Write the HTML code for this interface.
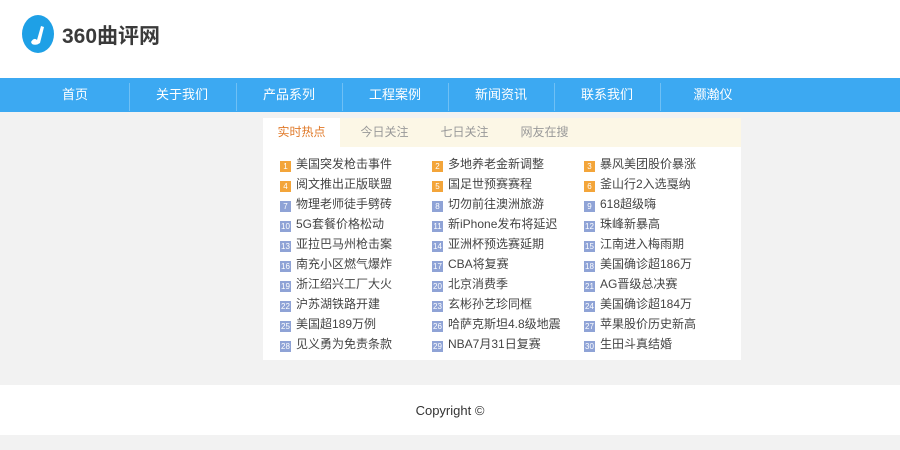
<!DOCTYPE html>
<html><head><meta charset="utf-8"><style>
*{margin:0;padding:0;box-sizing:border-box}
body{width:900px;height:450px;background:#f2f2f2;font-family:"Liberation Sans","Noto Sans CJK SC",sans-serif;position:relative;overflow:hidden}
.hd{position:absolute;left:0;top:0;width:900px;height:78px;background:#fff}
.logo{position:absolute;left:22px;top:15px;width:32px;height:38px;border-radius:50%;background:#1ea0e6}
.lt{position:absolute;left:62px;top:20px;font-size:21px;font-weight:bold;color:#3a3a3a}
.nav{position:absolute;left:0;top:78px;width:900px;height:34px;background:#3ca9f2}
.nav span{position:absolute;top:0;width:106px;height:34px;line-height:34px;text-align:center;color:#fff;font-size:13px}
.sep{position:absolute;top:5px;width:1px;height:28px;background:#6fc0f5}
.box{position:absolute;left:263px;top:118px;width:478px;height:242px;background:#fff}
.tabs{position:absolute;left:0;top:0;width:478px;height:29px;background:#fcf7e6}
.tabs span{position:absolute;top:0;height:29px;line-height:29px;font-size:12px;color:#999;text-align:center;width:77px}
.tabs .a{background:#fff;color:#e07a2a}
.it{position:absolute;font-size:12px;color:#444;height:14px;line-height:14px;white-space:nowrap}
.it b{display:inline-block;width:11px;height:11px;margin-right:5px;vertical-align:-1px;font-size:8px;color:#fff;text-align:center;line-height:11px;font-weight:normal;background:#8fa3d6}
.it b.o{background:#f3a53a}
.ft{position:absolute;left:0;top:385px;width:900px;height:50px;background:#fff;text-align:center;line-height:52px;font-size:13px;color:#333}
</style></head><body>
<div class="hd"><div class="logo"><svg width="32" height="38" viewBox="0 0 32 38"><path d="M9 27 Q12 22 15 25 L19 11 L22 12 L18 28 Q14 31 10 29Z" fill="#fff"/></svg></div><div class="lt">360曲评网</div></div>
<div class="nav">
<span style="left:22px">首页</span><span style="left:129px">关于我们</span><span style="left:236px">产品系列</span><span style="left:342px">工程案例</span><span style="left:448px">新闻资讯</span><span style="left:554px">联系我们</span><span style="left:660px">灏瀚仪</span>
<i class="sep" style="left:129px"></i><i class="sep" style="left:236px"></i><i class="sep" style="left:342px"></i><i class="sep" style="left:448px"></i><i class="sep" style="left:554px"></i><i class="sep" style="left:660px"></i>
</div>
<div class="box">
<div class="tabs"><span class="a" style="left:0">实时热点</span><span style="left:83px">今日关注</span><span style="left:163px">七日关注</span><span style="left:243px">网友在搜</span></div>
</div>
<div id="L"></div>
<div class="ft">Copyright ©</div>
<script>
var t=["美国突发枪击事件","多地养老金新调整","暴风美团股价暴涨","阅文推出正版联盟","国足世预赛赛程","釜山行2入选戛纳","物理老师徒手劈砖","切勿前往澳洲旅游","618超级嗨","5G套餐价格松动","新iPhone发布将延迟","珠峰新暴高","亚拉巴马州枪击案","亚洲杯预选赛延期","江南进入梅雨期","南充小区燃气爆炸","CBA将复赛","美国确诊超186万","浙江绍兴工厂大火","北京消费季","AG晋级总决赛","沪苏湖铁路开建","玄彬孙艺珍同框","美国确诊超184万","美国超189万例","哈萨克斯坦4.8级地震","苹果股价历史新高","见义勇为免责条款","NBA7月31日复赛","生田斗真结婚"];
var h="";for(var i=0;i<30;i++){var r=Math.floor(i/3),c=i%3;h+='<div class="it" style="left:'+(280+c*152)+'px;top:'+(157+r*20)+'px"><b'+(i<6?' class="o"':'')+'>'+(i+1)+'</b>'+t[i]+'</div>';}
document.getElementById("L").innerHTML=h;
</script>
</body></html>
